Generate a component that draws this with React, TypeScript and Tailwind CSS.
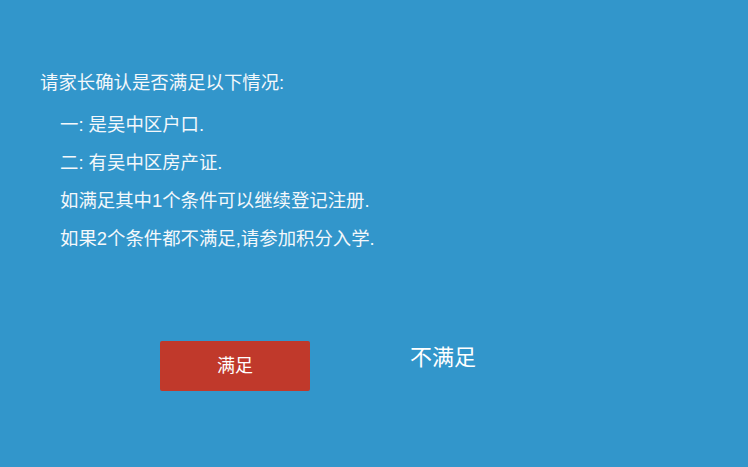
export default function App() {
  const font = { fontFamily: '"Liberation Sans", "Noto Sans CJK SC", sans-serif' };
  return (
    <div className="w-[748px] h-[467px] bg-[#3296cb] text-[#f4f8fb] overflow-hidden" style={font}>
      <div className="pt-[64px] pl-[40px]">
        <p className="text-[18.4px] leading-[38px]">请家长确认是否满足以下情况:</p>
        <ul className="mt-[4px] pl-[20px] text-[18.4px] leading-[38px]">
          <li>一: 是吴中区户口.</li>
          <li>二: 有吴中区房产证.</li>
          <li>如满足其中1个条件可以继续登记注册.</li>
          <li>如果2个条件都不满足,请参加积分入学.</li>
        </ul>
        <div className="mt-[83px] pl-[120px] flex items-start">
          <button className="w-[150px] h-[50px] bg-[#c0392b] rounded-[2px] text-white text-[18px]">
            满足
          </button>
          <button className="ml-[58px] w-[150px] leading-[34px] text-white text-[22px]">
            不满足
          </button>
        </div>
      </div>
    </div>
  );
}
